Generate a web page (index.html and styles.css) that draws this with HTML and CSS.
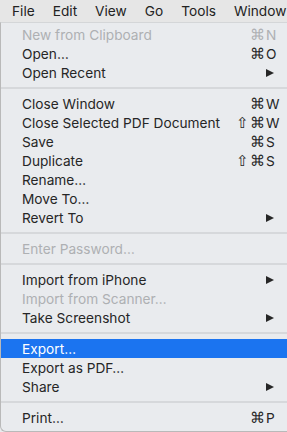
FILE: index.html
```html
<!DOCTYPE html>
<html>
<head>
<meta charset="utf-8">
<link rel="stylesheet" href="styles.css">
</head>
<body>
<div class="menubar">
  <span class="mb-item">File</span>
  <span class="mb-item">Edit</span>
  <span class="mb-item">View</span>
  <span class="mb-item">Go</span>
  <span class="mb-item">Tools</span>
  <span class="mb-item">Window</span>
</div>
<div class="menu">
  <div class="row disabled"><span class="label">New from Clipboard</span><span class="sc"><span class="mod">⌘</span><span class="key">N</span></span></div>
  <div class="row"><span class="label">Open…</span><span class="sc"><span class="mod">⌘</span><span class="key">O</span></span></div>
  <div class="row"><span class="label">Open Recent</span><span class="arrow"></span></div>
  <div class="sep"></div>
  <div class="row"><span class="label">Close Window</span><span class="sc"><span class="mod">⌘</span><span class="key">W</span></span></div>
  <div class="row"><span class="label">Close Selected PDF Document</span><span class="sc"><span class="mod">⇧⌘</span><span class="key">W</span></span></div>
  <div class="row"><span class="label">Save</span><span class="sc"><span class="mod">⌘</span><span class="key">S</span></span></div>
  <div class="row"><span class="label">Duplicate</span><span class="sc"><span class="mod">⇧⌘</span><span class="key">S</span></span></div>
  <div class="row"><span class="label">Rename…</span></div>
  <div class="row"><span class="label">Move To…</span></div>
  <div class="row"><span class="label">Revert To</span><span class="arrow"></span></div>
  <div class="sep"></div>
  <div class="row disabled"><span class="label">Enter Password…</span></div>
  <div class="sep"></div>
  <div class="row"><span class="label">Import from iPhone</span><span class="arrow"></span></div>
  <div class="row disabled"><span class="label">Import from Scanner…</span></div>
  <div class="row"><span class="label">Take Screenshot</span><span class="arrow"></span></div>
  <div class="sep"></div>
  <div class="row active"><span class="label">Export…</span></div>
  <div class="row"><span class="label">Export as PDF…</span></div>
  <div class="row"><span class="label">Share</span><span class="arrow"></span></div>
  <div class="sep"></div>
  <div class="row"><span class="label">Print…</span><span class="sc"><span class="mod">⌘</span><span class="key">P</span></span></div>
</div>
</body>
</html>
```
FILE: styles.css
```css
* { box-sizing: border-box; }
html, body {
  margin: 0;
  padding: 0;
  background: #e9ebee;
}
body {
  font-family: Inter, "Noto Sans", sans-serif;
  font-size: 13.7px;
  color: #262626;
  width: 287px;
  height: 432px;
  overflow: hidden;
}
.menubar {
  height: 22px;
  background: #e6e6e6;
  display: flex;
  align-items: center;
  padding-left: 12px;
  gap: 18px;
  white-space: nowrap;
  overflow: hidden;
  color: #222;
}
.mb-item { flex: none; }
.menu {
  background: #e9ebee;
  border-left: 1px solid #b9b9b9;
  border-bottom: 1px solid #b9b9b9;
  border-top: 1px solid #d4d6d8;
  border-bottom-left-radius: 6px;
  padding: 2px 0 4px 0;
  height: 410px;
}
.row {
  height: 19px;
  display: flex;
  align-items: center;
  padding-left: 21px;
  padding-right: 7px;
  white-space: nowrap;
}
.row .label { flex: 1; }
.row.disabled { color: #aeb0b3; }
.row.active { background: #1b74f0; color: #fff; }
.sc { display: flex; align-items: center; }
.mod {
  font-family: "DejaVu Sans", sans-serif;
  font-weight: 200;
  font-size: 15px;
  line-height: 19px;
  padding-top: 2px;
  text-align: right;
  letter-spacing: 0.5px;
}
.key { width: 15px; text-align: left; padding-left: 1px; }
.arrow {
  width: 0; height: 0;
  border-top: 4.5px solid transparent;
  border-bottom: 4.5px solid transparent;
  border-left: 8px solid #262626;
  margin-right: 6px;
}
.sep {
  height: 12px;
  display: flex;
  align-items: center;
}
.sep::after {
  content: "";
  display: block;
  width: 100%;
  height: 2px;
  background: #d6d8db;
}
```
